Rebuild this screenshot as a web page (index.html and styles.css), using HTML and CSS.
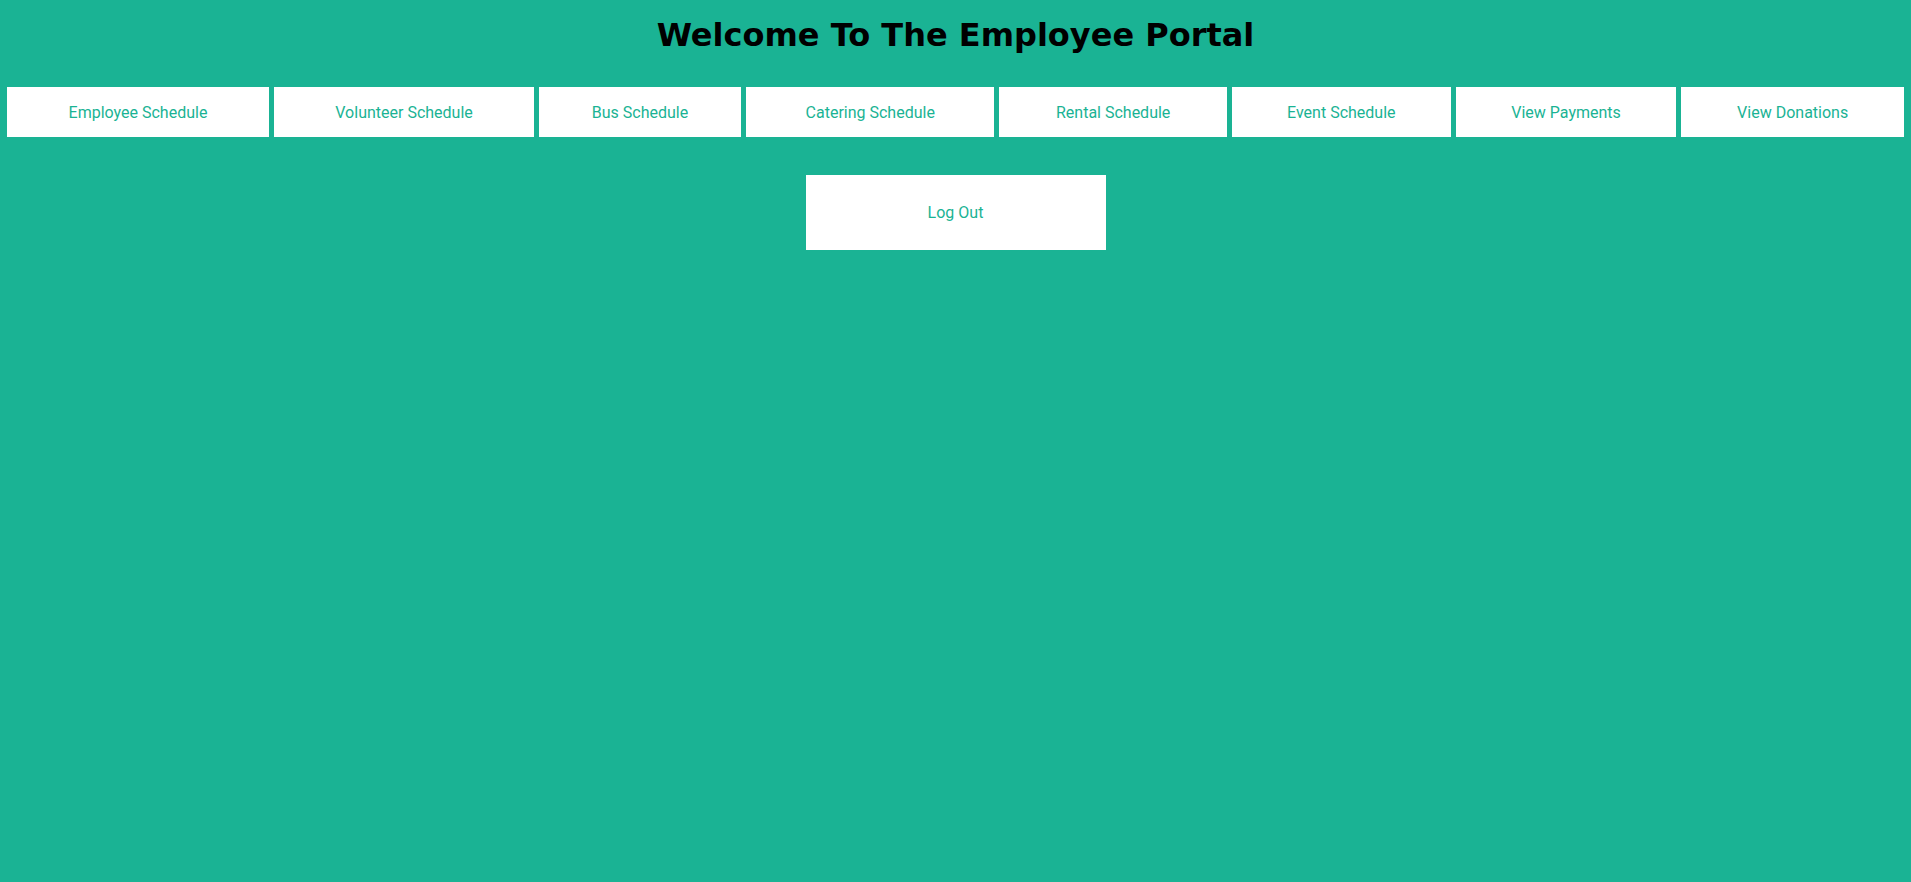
FILE: index.html
```html
<!DOCTYPE html>
<html lang="en">
<head>
<meta charset="utf-8">
<title>Employee Portal</title>
<link rel="stylesheet" href="styles.css">
</head>
<body>
<h1 class="title">Welcome To The Employee Portal</h1>
<nav class="nav">
  <div class="nav-table">
    <a class="nav-item" href="#">Employee Schedule</a>
    <a class="nav-item" href="#">Volunteer Schedule</a>
    <a class="nav-item" href="#">Bus Schedule</a>
    <a class="nav-item" href="#">Catering Schedule</a>
    <a class="nav-item" href="#">Rental Schedule</a>
    <a class="nav-item" href="#">Event Schedule</a>
    <a class="nav-item" href="#">View Payments</a>
    <a class="nav-item" href="#">View Donations</a>
  </div>
</nav>
<div class="logout-wrap">
  <a class="logout" href="#">Log Out</a>
</div>
</body>
</html>
```
FILE: styles.css
```css
html, body {
  margin: 0;
  padding: 0;
}
body {
  background: #1ab394;
  min-height: 882px;
  font-family: Roboto, "Liberation Sans", sans-serif;
}
.title {
  margin: 17px 0 0;
  text-align: center;
  font-family: "DejaVu Sans", Verdana, sans-serif;
  font-weight: bold;
  font-size: 32px;
  line-height: 37px;
  color: #000;
}
.nav {
  padding: 0 2px;
  margin-top: 33px;
}
.nav-table {
  display: table;
  width: 100%;
  border-spacing: 5px 0;
}
.nav-item {
  display: table-cell;
  height: 50px;
  vertical-align: middle;
  padding: 0 23px;
  background: #fff;
  color: #1ab394;
  text-align: center;
  white-space: nowrap;
  text-decoration: none;
  font-size: 16px;
}
.logout-wrap {
  display: flex;
  justify-content: center;
  margin-top: 38px;
}
.logout {
  display: flex;
  align-items: center;
  justify-content: center;
  width: 300px;
  height: 75px;
  background: #fff;
  color: #1ab394;
  text-decoration: none;
  font-size: 16px;
}
```
